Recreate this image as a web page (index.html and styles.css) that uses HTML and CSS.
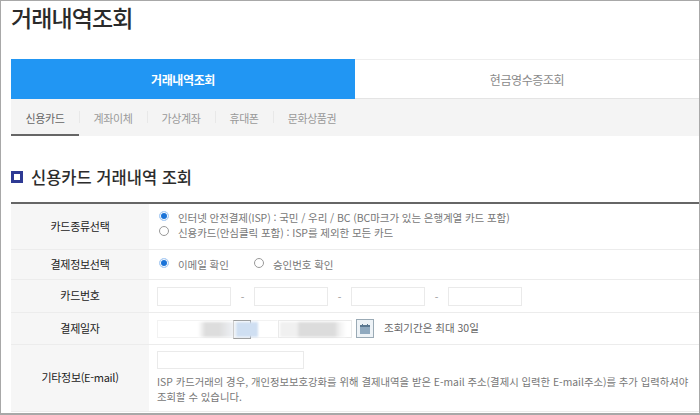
FILE: index.html
```html
<!DOCTYPE html>
<html lang="ko">
<head>
<meta charset="utf-8">
<title>거래내역조회</title>
<link rel="stylesheet" href="styles.css">
</head>
<body>
<div class="frame">
  <h1 class="title">거래내역조회</h1>
  <div class="tabs">
    <div class="tab active">거래내역조회</div>
    <div class="tab">현금영수증조회</div>
  </div>
  <div class="subtabs">
    <div class="sub on">신용카드</div>
    <div class="sub s2">계좌이체</div>
    <div class="sub s3">가상계좌</div>
    <div class="sub s4">휴대폰</div>
    <div class="sub s5">문화상품권</div>
  </div>
  <h2 class="heading"><span class="mark"></span>신용카드 거래내역 조회</h2>
  <div class="table">
    <div class="row r1">
      <div class="label">카드종류선택</div>
      <div class="cell stack">
        <div class="opt"><span class="radio checked"></span>인터넷 안전결제(ISP) : 국민 / 우리 / BC (BC마크가 있는 은행계열 카드 포함)</div>
        <div class="opt"><span class="radio"></span>신용카드(안심클릭 포함) : ISP를 제외한 모든 카드</div>
      </div>
    </div>
    <div class="row r2">
      <div class="label">결제정보선택</div>
      <div class="cell">
        <div class="opt w1"><span class="radio checked"></span>이메일 확인</div>
        <div class="opt"><span class="radio"></span>승인번호 확인</div>
      </div>
    </div>
    <div class="row r3">
      <div class="label">카드번호</div>
      <div class="cell cards">
        <span class="input card"></span><span class="dash">-</span>
        <span class="input card"></span><span class="dash">-</span>
        <span class="input card"></span><span class="dash">-</span>
        <span class="input card"></span>
      </div>
    </div>
    <div class="row r4">
      <div class="label">결제일자</div>
      <div class="cell dates">
        <span class="input date1"><span class="blur b1"></span><span class="calbox"></span><span class="blur b2"></span></span>
        <span class="input date2"><span class="blur b3"></span></span>
        <span class="calbtn">
          <svg width="12" height="12" viewBox="0 0 12 12"><rect x="1" y="2" width="10" height="9" fill="#8fa9bf"/><rect x="1" y="2" width="10" height="2" fill="#5b7890"/><rect x="3" y="1" width="1" height="2" fill="#5b7890"/><rect x="8" y="1" width="1" height="2" fill="#5b7890"/></svg>
        </span>
        <span class="note">조회기간은 최대 30일</span>
      </div>
    </div>
    <div class="row r5">
      <div class="label">기타정보(E-mail)</div>
      <div class="cell info">
        <span class="input email"></span>
        <p class="desc">ISP 카드거래의 경우, 개인정보보호강화를 위해 결제내역을 받은 E-mail 주소(결제시 입력한 E-mail주소)를 추가 입력하셔야 조회할 수 있습니다.</p>
      </div>
    </div>
  </div>
</div>
</body>
</html>
```

FILE: styles.css
```css
* { box-sizing: border-box; }
html, body { margin: 0; padding: 0; background: #fff; }
body { font-family: "Noto Sans CJK KR", "Noto Sans", sans-serif; }
.frame {
  width: 700px; height: 415px; overflow: hidden;
  border: 1px solid #a8a8a8; border-bottom: 2px solid #a8a8a8;
  padding: 0 10px; position: relative;
}
.title {
  margin: 0; height: 58px; padding-top: 0;
  font-size: 23px; font-weight: 500; line-height: 33px; color: #2a2a2a; letter-spacing: -0.9px;
}
.tabs { display: flex; height: 40px; width: 688px; }
.tab {
  flex: 1; display: flex; align-items: center; justify-content: center;
  font-size: 12px; color: #8a8a8a; letter-spacing: -0.4px;
  border-top: 1px solid #eee; border-bottom: 1px solid #e4e4e4;
}
.tab.active { flex: 0 0 344px; background: #2196f3; color: #fff; font-weight: 700; border: 0; }
.subtabs { display: flex; height: 37px; width: 688px; background: #f4f4f4; }
.sub {
  display: flex; align-items: center; justify-content: center; height: 37px;
  font-size: 11px; color: #999; letter-spacing: -0.4px; position: relative;
  width: 68px;
}
.sub.on { color: #666; border-bottom: 2px solid #666; padding-top: 2px; }
.s4 { width: 58px; }
.s5 { width: 78px; }
.s2::before, .s3::before, .s4::before, .s5::before {
  content: ""; position: absolute; left: 0; top: 12px; height: 12px; width: 1px; background: #e8e8e8;
}
.heading {
  margin: 0; height: 66px; padding-top: 27px; display: flex; align-items: flex-start;
  font-size: 16.5px; font-weight: 500; line-height: 28px; color: #2c2c2c; letter-spacing: 0;
}
.mark {
  width: 12px; height: 12px; border: 3px solid #2e3a94; margin: 8px 8px 0 0; background: #fff;
}
.table { width: 688px; border-top: 2px solid #666; }
.row { display: flex; border-bottom: 1px solid #ececec; }
.r1 { height: 46px; }
.r2 { height: 30px; }
.r3 { height: 33px; }
.r4 { height: 32px; }
.r5 { height: 67px; }
.label {
  flex: 0 0 138px; background: #f6f6f6; display: flex; align-items: center; justify-content: center;
  font-size: 11px; font-weight: 400; color: #222; letter-spacing: -0.3px; padding-bottom: 2px;
}
.cell {
  flex: 1; display: flex; align-items: center; padding-left: 8px;
  font-size: 10.5px; color: #777;
}
.stack { flex-direction: column; align-items: flex-start; justify-content: center; line-height: 15px; padding-bottom: 3px; }
.opt { display: flex; align-items: center; white-space: nowrap; letter-spacing: -0.08px; }
.w1 { width: 95px; }
.radio {
  width: 10px; height: 10px; border: 1px solid #999; border-radius: 50%; margin: 0 9px 0 2px; background: #fff;
  flex: none; margin-top: -3px;
}
.radio.checked { border: 1px solid #b5d3f5; background: #1a73d8; box-shadow: inset 0 0 0 1px #fff; }
.input { display: block; background: #fff; border: 1px solid #eaeaea; height: 19px; flex: none; }
.card { width: 74px; }
.dash { width: 23px; text-align: center; color: #999; flex: none; }
.dates { position: relative; }
.date1 { width: 121px; height: 18px; position: relative; border-color: #f2f2f2; border-right-color: transparent; }
.date2 { width: 74px; height: 18px; position: relative; margin-right: 4px; }
.blur { position: absolute; display: block; filter: blur(1px); }
.b1 { left: 40px; top: 1px; width: 38px; height: 15px; background: linear-gradient(90deg, #fff 0, #ddd 20%, #ddd 55%, #f2f5fa 100%); }
.calbox { position: absolute; left: 75px; top: -1px; width: 18px; height: 19px; border: 1px solid #9a9a9a; border-left-color: #ccc; }
.b2 { left: 78px; top: 1px; width: 22px; height: 15px; background: #cfdff2; }
.b3 { left: 1px; top: 1px; width: 66px; height: 15px; background: linear-gradient(90deg, #f0f0f0 0, #f0f0f0 25%, #dcdcdc 30%, #dcdcdc 82%, #f0f0f0 90%, #fff 100%); }
.calbtn {
  width: 18px; height: 19px; border: 1px solid #9aaab5; background: #eef3f7;
  display: flex; align-items: center; justify-content: center; flex: none; margin-right: 10px;
}
.note { font-size: 10.5px; color: #666; white-space: nowrap; padding-bottom: 2px; }
.info { flex-direction: column; align-items: flex-start; padding-top: 6px; }
.email { width: 147px; height: 18px; }
.desc { margin: 5px 0 0; font-size: 10.35px; line-height: 15px; color: #777; width: 540px; letter-spacing: 0; }
```
